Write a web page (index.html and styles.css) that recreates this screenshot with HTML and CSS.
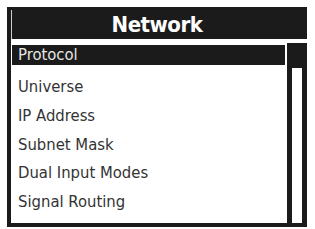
FILE: index.html
```html
<!DOCTYPE html>
<html lang="en">
<head>
    <meta charset="UTF-8">
    <meta name="viewport" content="width=device-width, initial-scale=1.0">
    <title>Network</title>
    <link rel="stylesheet" href="styles.css">
</head>
<body>
    <div class="panel">
        <div class="panel-header">
            <h1>Network</h1>
        </div>

        <div class="panel-body">
            <ul class="menu">
                <li class="menu-item selected">Protocol</li>
                <li class="menu-item">Universe</li>
                <li class="menu-item">IP Address</li>
                <li class="menu-item">Subnet Mask</li>
                <li class="menu-item">Dual Input Modes</li>
                <li class="menu-item">Signal Routing</li>
            </ul>

            <!-- barra de rolagem -->
            <div class="scrollbar">
                <div class="scroll-track"></div>
            </div>
        </div>
    </div>
</body>
</html>
```

FILE: styles.css
```css
* {
    margin: 0;
    padding: 0;
    box-sizing: border-box;
    font-family: 'DejaVu Sans Condensed', 'DejaVu Sans', sans-serif;
    font-stretch: condensed;
}

body {
    background-color: #fff;
    padding: 7px 0 0 7px;
}

.panel {
    width: 300px;
    height: 220px;
    display: flex;
    flex-direction: column;
    border-bottom: 4px solid #1b1b1b;
}

.panel-header {
    height: 32px;
    background: #1b1b1b;
    padding: 3px 5px 0 4px;
}

.panel-header h1 {
    height: 29px;
    border-left: 1px solid #cfcfcf;
    color: #fff;
    font-size: 22px;
    font-weight: bold;
    letter-spacing: -0.5px;
    line-height: 29px;
    text-align: center;
}

.panel-body {
    flex: 1;
    display: flex;
    border-left: 4px solid #1b1b1b;
    padding-top: 4px;
}

.menu {
    flex: 1;
    list-style: none;
    padding: 2px 2px 0 1px;
}

.menu-item {
    height: 20px;
    line-height: 20px;
    padding-left: 6px;
    margin-bottom: 8.75px;
    font-size: 16.5px;
    color: #333;
    white-space: nowrap;
}

.menu-item.selected {
    background: #1b1b1b;
    color: #e6e6e6;
    margin-bottom: 12px;
}

.scrollbar {
    width: 20px;
    background: #1b1b1b;
    padding: 25px 5px 0 5px;
    display: flex;
    flex-direction: column;
}

.scroll-track {
    flex: 1;
    background: #fff;
}
```
